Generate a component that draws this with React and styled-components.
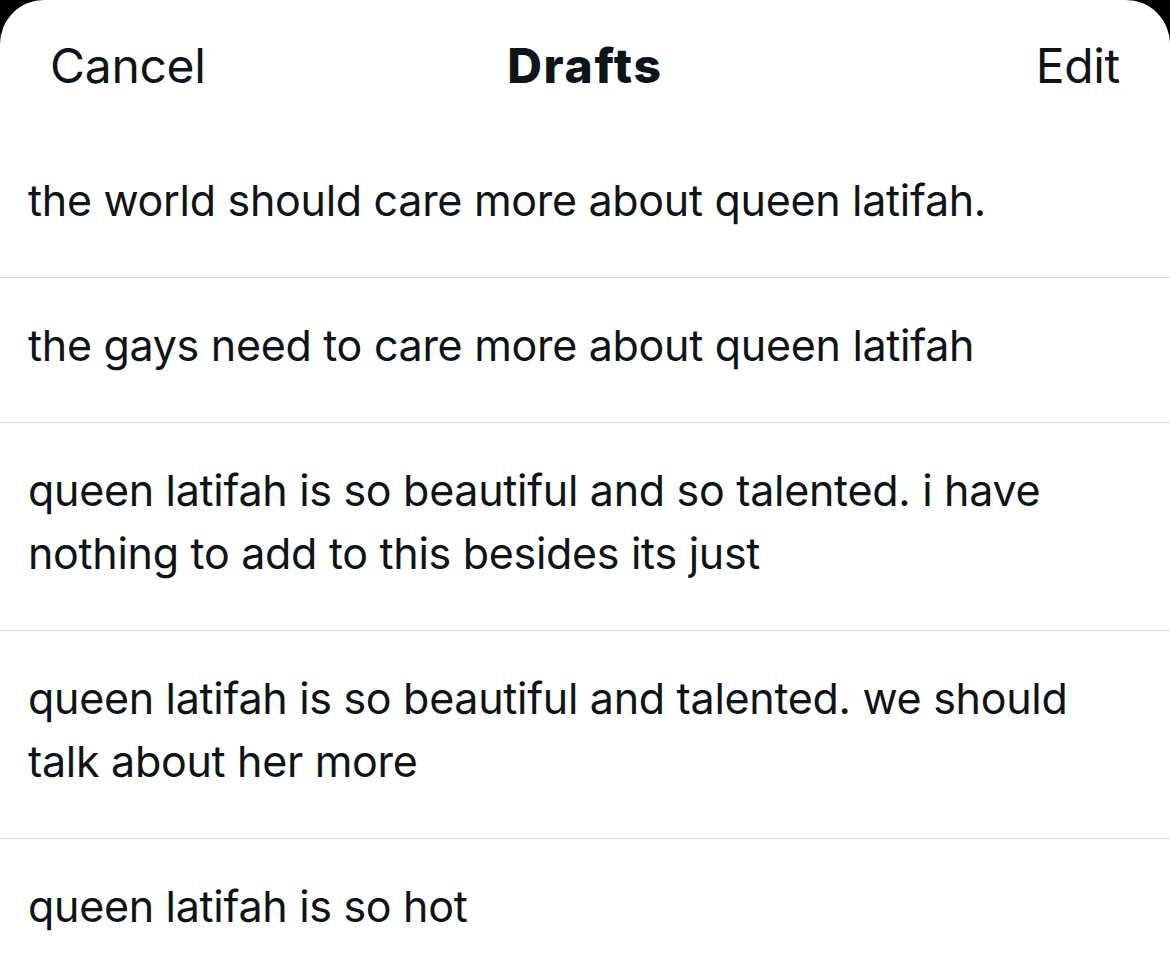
import styled, { createGlobalStyle } from "styled-components";

const drafts = [
  "the world should care more about queen latifah.",
  "the gays need to care more about queen latifah",
  "queen latifah is so beautiful and so talented. i have nothing to add to this besides its just",
  "queen latifah is so beautiful and talented. we should talk about her more",
  "queen latifah is so hot",
];

export default function App() {
  return (
    <>
      <GlobalStyle />
      <Sheet>
        <Header>
          <HeaderButton>Cancel</HeaderButton>
          <Title>Drafts</Title>
          <HeaderButton $align="right">Edit</HeaderButton>
        </Header>
        <List>
          {drafts.map((text, index) => (
            <DraftRow key={index} $last={index === drafts.length - 1}>
              {text}
            </DraftRow>
          ))}
        </List>
      </Sheet>
    </>
  );
}

const GlobalStyle = createGlobalStyle`
  body {
    margin: 0;
    background: #000000;
    font-family: Inter, "Noto Sans", sans-serif;
    color: #0f1419;
  }
`;

const Sheet = styled.div`
  width: 1170px;
  height: 978px;
  background: #ffffff;
  border-radius: 44px 44px 0 0;
  overflow: hidden;
`;

const Header = styled.div`
  height: 133px;
  display: grid;
  grid-template-columns: 1fr auto 1fr;
  align-items: center;
  padding: 0 50px;
  box-sizing: border-box;
`;

const HeaderButton = styled.span`
  font-size: 48px;
  font-weight: 400;
  letter-spacing: -0.3px;
  text-align: ${(props) => (props.$align === "right" ? "right" : "left")};
  margin-top: -2px;
`;

const Title = styled.span`
  font-size: 48px;
  font-weight: 800;
  letter-spacing: 1.7px;
  margin-top: -2px;
`;

const List = styled.div`
  display: flex;
  flex-direction: column;
`;

const DraftRow = styled.div`
  padding: 36px 60px 45px 28px;
  font-size: 43px;
  line-height: 63px;
  letter-spacing: -0.3px;
  border-bottom: ${(props) => (props.$last ? "none" : "1px solid #dcdcdc")};
`;
